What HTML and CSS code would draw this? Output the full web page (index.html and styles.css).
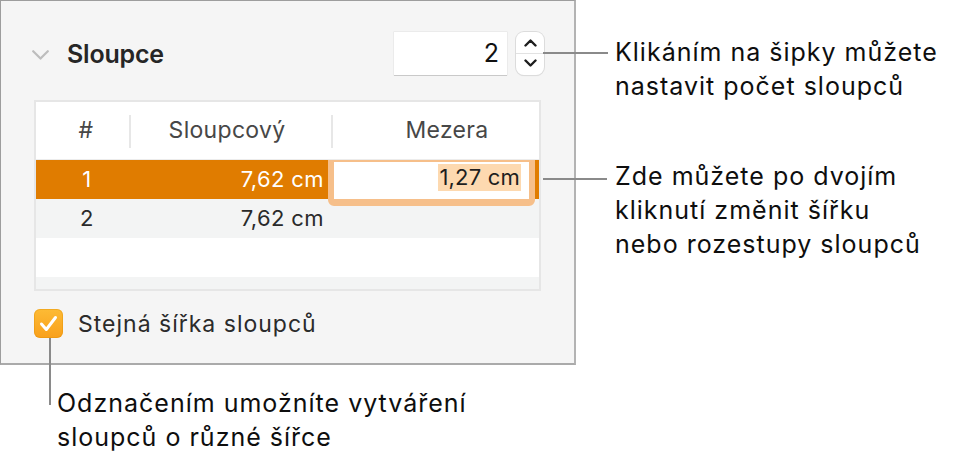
FILE: index.html
```html
<!DOCTYPE html>
<html lang="cs">
<head>
<meta charset="utf-8">
<title>Sloupce</title>
<link rel="stylesheet" href="styles.css">
</head>
<body>
<div class="stage">
  <div class="left">
    <div class="panel">
      <div class="header">
        <svg class="chevron" width="17" height="10" viewBox="0 0 17 10"><polyline points="1.2,1.2 8.5,8.6 15.8,1.2" fill="none" stroke="#bdbdbd" stroke-width="2.2" stroke-linecap="round" stroke-linejoin="round"/></svg>
        <span class="title">Sloupce</span>
        <div class="numfield">2</div>
        <div class="stepper">
          <span class="step up"><svg width="13" height="8" viewBox="0 0 13 8"><polyline points="1.5,6.5 6.5,1.5 11.5,6.5" fill="none" stroke="#1e1e1e" stroke-width="2.4" stroke-linecap="round" stroke-linejoin="round"/></svg></span>
          <span class="step down"><svg width="13" height="8" viewBox="0 0 13 8"><polyline points="1.5,1.5 6.5,6.5 11.5,1.5" fill="none" stroke="#1e1e1e" stroke-width="2.4" stroke-linecap="round" stroke-linejoin="round"/></svg></span>
        </div>
      </div>
      <div class="table">
        <div class="row head">
          <div class="cell c1">#</div>
          <div class="cell c2 sep">Sloupcový</div>
          <div class="cell c3 sep">Mezera</div>
        </div>
        <div class="row sel">
          <div class="cell c1">1</div>
          <div class="cell c2">7,62 cm</div>
          <div class="cell c3 editing">
            <div class="editor"><span class="hl">1,27 cm</span></div>
          </div>
        </div>
        <div class="row alt">
          <div class="cell c1">2</div>
          <div class="cell c2">7,62 cm</div>
          <div class="cell c3"></div>
        </div>
        <div class="row plain"></div>
        <div class="row partial"></div>
      </div>
      <div class="checkrow">
        <span class="checkbox"><svg width="29" height="29" viewBox="0 0 29 29"><polyline points="7.5,15 12.3,20.5 21.5,8.5" fill="none" stroke="#fff" stroke-width="3" stroke-linecap="round" stroke-linejoin="round"/></svg></span>
        <span class="checklabel">Stejná šířka sloupců</span>
      </div>
    </div>
    <p class="note bottom">Odznačením umožníte vytváření<br>sloupců o různé šířce</p>
  </div>
  <div class="right">
    <p class="note n1">Klikáním na šipky můžete<br>nastavit počet sloupců</p>
    <p class="note n2">Zde můžete po dvojím<br>kliknutí změnit šířku<br>nebo rozestupy sloupců</p>
  </div>
  <span class="leader h1"></span>
  <span class="leader h2"></span>
  <span class="leader v1"></span>
</div>
</body>
</html>
```
FILE: styles.css
```css
* { box-sizing: border-box; }
html, body { margin: 0; padding: 0; background: #fff; }
body { font-family: Inter, "Noto Sans", sans-serif; color: #111; }

.stage { position: relative; width: 953px; height: 467px; display: flex; }
.left { width: 576px; flex: none; }
.right { padding-top: 35px; padding-left: 39px; }

.panel {
  width: 576px;
  height: 365px;
  background: #f5f5f5;
  border-top: 1px solid #9d9d9d;
  border-left: 1px solid #9d9d9d;
  border-right: 2px solid #b3b3b3;
  border-bottom: 2px solid #aaaaaa;
  padding-top: 31px;
}

.header { display: flex; align-items: center; height: 43px; padding-left: 31px; padding-right: 30px; }
.chevron { flex: none; margin-right: 18px; margin-top: 2px; }
.title { font-size: 25px; font-weight: 600; color: #262626; letter-spacing: -0.2px; }
.numfield {
  margin-left: auto;
  width: 113px; height: 43px;
  background: #fff;
  box-shadow: 0 1px 0 #c9c9c9, 0 0 0 0.5px #e2e2e2;
  font-size: 25px; line-height: 43px; text-align: right;
  padding-right: 8px; color: #111;
}
.stepper {
  margin-left: 9px; width: 28px; height: 43px;
  background: #fff; border-radius: 8px;
  box-shadow: 0 0 0 1px #dcdcdc, 0 1px 1px rgba(0,0,0,0.12);
  display: flex; flex-direction: column;
}
.step { flex: 1; display: flex; align-items: center; justify-content: center; }
.step.up { border-bottom: 1px solid #e2e2e2; padding-top: 1px; }
.step.down { padding-bottom: 2px; }

.table {
  margin: 25px 0 0 33px;
  width: 507px; height: 191px;
  border: 2px solid #e6e6e6;
  background: #fff;
  overflow: hidden;
}
.row { display: grid; grid-template-columns: 94px 202px 207px; height: 39px; font-size: 22px; color: #2a2a2a; letter-spacing: 0.4px; }
.cell { position: relative; line-height: 39px; white-space: nowrap; }
.c1 { text-align: center; padding-left: 8px; }
.c2 { text-align: right; padding-right: 8px; }
.c3 { text-align: right; }
.row.head { height: 58px; background: #fff; border-bottom: 1px solid #ececec; letter-spacing: 0.3px; }
.row.head .cell { line-height: 57px; font-size: 23px; color: #474747; text-align: center; }
.row.head .c1 { padding-left: 6px; }
.row.head .c3 { padding-left: 23px; }
.sep::before { content: ""; position: absolute; left: -1px; top: 13px; width: 2px; height: 33px; background: #e7e7e7; }
.row.sel { background: #e07c00; color: #fff; }
.row.alt { background: #f3f4f4; }
.row.plain { background: #fff; }
.row.partial { background: #f3f4f4; height: 12px; }

.editor {
  position: absolute; left: -4px; top: 0;
  width: 207px; height: 46px;
  background: #fff;
  border-style: solid; border-color: #f6bf8a;
  border-width: 2px 6px 7px 6px;
  border-radius: 0 0 6px 6px;
  text-align: right; padding-right: 8px;
  color: #1e1e1e;
}
.hl { display: inline-block; background: #fdd9b0; line-height: 27px; margin-top: 2px; padding: 0 1px; vertical-align: top; letter-spacing: 0.2px; }

.checkrow { display: flex; align-items: center; margin: 18px 0 0 33px; height: 29px; }
.checkbox {
  width: 29px; height: 29px; border-radius: 6px; flex: none;
  background: linear-gradient(#fdbb35, #f9a01b);
  box-shadow: inset 0 0 0 1px rgba(220,140,0,0.35);
  display: block;
}
.checkbox svg { display: block; }
.checklabel { margin-left: 15px; font-size: 23px; color: #2b2b2b; letter-spacing: 1px; }

.note { margin: 0; font-size: 25px; line-height: 34px; color: #0e0e0e; white-space: nowrap; letter-spacing: 1px; }
.note.bottom { margin: 21px 0 0 57px; }
.note.n2 { margin-top: 56px; }

.leader { position: absolute; background: #8a8a8a; }
.leader.h1 { left: 543px; top: 52px; width: 65px; height: 2px; }
.leader.h2 { left: 543px; top: 178px; width: 64px; height: 2px; }
.leader.v1 { left: 49px; top: 338px; width: 2px; height: 67px; }
```
